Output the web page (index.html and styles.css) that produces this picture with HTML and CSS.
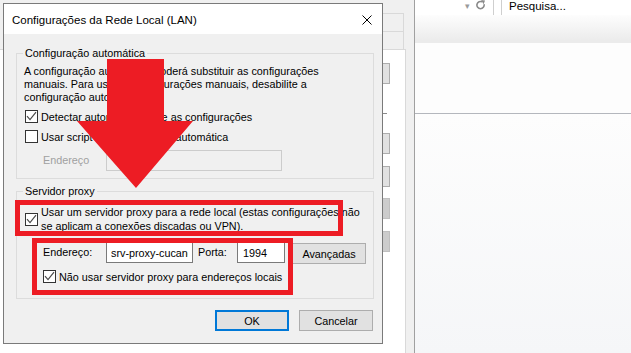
FILE: index.html
```html
<!DOCTYPE html>
<html lang="pt-BR">
<head>
<meta charset="utf-8">
<title>Configurações da Rede Local (LAN)</title>
<link rel="stylesheet" href="styles.css">
</head>
<body>
<div class="desktop">
  <div class="inetopt">
    <div class="io-top">
      <div class="io-box"><div class="io-box-row"></div></div>
    </div>
    <div class="io-panel">
      <div class="stub"></div>
      <div class="io-line"></div>
      <div class="stub stub-2"></div>
      <div class="stub stub-3"></div>
      <div class="stub stub-off stub-4"></div>
      <div class="stub stub-off stub-5"></div>
    </div>
  </div>

  <div class="browser">
    <div class="toolbar">
      <div class="address">
        <span class="dd">▾</span>
        <svg class="refresh" width="10" height="11" viewBox="0 0 10 11"><path d="M8 4.2 A3.6 3.6 0 1 1 6.2 1.9" fill="none" stroke="#8a8a8a" stroke-width="1.6"/><path d="M5 0 L9 0.6 L7.6 4.2 Z" fill="#8a8a8a"/></svg>
      </div>
      <div class="search">Pesquisa...</div>
    </div>
    <div class="cmdbar"></div>
    <div class="cmdstrip"></div>
    <div class="content">
      <div class="content-head"></div>
      <div class="content-body"></div>
    </div>
  </div>

  <div class="dialog">
    <div class="titlebar">
      <span class="title">Configurações da Rede Local (LAN)</span>
      <svg class="close" width="10" height="10" viewBox="0 0 10 10"><path d="M0.5 0.5 L9.5 9.5 M9.5 0.5 L0.5 9.5" stroke="#000" stroke-width="1"/></svg>
    </div>
    <div class="dlg-body">
      <fieldset class="group group-auto">
        <legend>Configuração automática</legend>
        <p class="desc">A configuração automática poderá substituir as configurações<br>manuais. Para usar as configurações manuais, desabilite a<br>configuração automática.</p>
        <div class="check-row row-detect">
          <span class="box"><svg width="11" height="11" viewBox="0 0 11 11"><path d="M1 5.2 L4 8.6 L10 1.2" fill="none" stroke="#4a4a4a" stroke-width="1.2"/></svg></span>
          <span>Detectar automaticamente as configurações</span>
        </div>
        <div class="check-row row-script">
          <span class="box"></span>
          <span>Usar script de configuração automática</span>
        </div>
        <div class="field-row row-disabled">
          <span class="lbl lbl-off">Endereço</span>
          <input class="inp inp-off" type="text" disabled>
        </div>
      </fieldset>

      <fieldset class="group group-proxy">
        <legend>Servidor proxy</legend>
        <div class="check-row check-multi">
          <span class="box"><svg width="11" height="11" viewBox="0 0 11 11"><path d="M1 5.2 L4 8.6 L10 1.2" fill="none" stroke="#4a4a4a" stroke-width="1.2"/></svg></span>
          <span class="multi">Usar um servidor proxy para a rede local (estas configurações não<br>se aplicam a conexões discadas ou VPN).</span>
        </div>
        <div class="field-row row-proxy">
          <span class="lbl">Endereço:</span>
          <input class="inp inp-addr" type="text" value="srv-proxy-cucanorte">
          <span class="lbl lbl-port">Porta:</span>
          <input class="inp inp-port" type="text" value="1994">
          <button class="btn btn-adv" type="button">Avançadas</button>
        </div>
        <div class="check-row row-local">
          <span class="box"><svg width="11" height="11" viewBox="0 0 11 11"><path d="M1 5.2 L4 8.6 L10 1.2" fill="none" stroke="#4a4a4a" stroke-width="1.2"/></svg></span>
          <span>Não usar servidor proxy para endereços locais</span>
        </div>
      </fieldset>

      <div class="actions">
        <button class="btn btn-ok" type="button">OK</button>
        <button class="btn" type="button">Cancelar</button>
      </div>
    </div>
  </div>

  <svg class="arrow" width="631" height="353" viewBox="0 0 631 353">
    <polygon points="107,59 164,59 164,121 193,121 136,188 77,121 107,121" fill="#ed1c24"/>
  </svg>
  <div class="mark mark-1"></div>
  <div class="mark mark-2"></div>
</div>
</body>
</html>
```

FILE: styles.css
```css
* { box-sizing: border-box; }
html, body { margin: 0; padding: 0; }
body {
  width: 631px;
  height: 353px;
  overflow: hidden;
  font-family: "Liberation Sans", Arial, sans-serif;
  font-size: 10.8px;
  color: #000;
  background: #f0f0f0;
}
.desktop {
  position: relative;
  display: flex;
  width: 631px;
  height: 353px;
}

/* Internet Options window behind */
.inetopt {
  width: 414px;
  display: flex;
  flex-direction: column;
  background: #f0f0f0;
}
.io-top {
  height: 49px;
  padding: 13px 0 0 340px;
}
.io-box {
  width: 64px;
  height: 36px;
  border-top: 1px solid #d9d9d9;
  border-right: 1px solid #d9d9d9;
}
.io-box-row {
  height: 18px;
  border-bottom: 1px solid #d9d9d9;
}
.io-panel {
  flex: 1;
  width: 406px;
  background: #fff;
  border-top: 1px solid #d9d9d9;
  border-right: 1px solid #d9d9d9;
  display: flex;
  flex-direction: column;
  align-items: flex-end;
  padding: 13px 15px 0 0;
}
.stub {
  width: 24px;
  height: 21px;
  background: #e1e1e1;
  border: 1px solid #adadad;
}
.io-line {
  width: 10px;
  height: 1px;
  background: #8a8a8a;
  margin: 29px 3px 0 0;
}
.stub-2 { margin-top: 19px; }
.stub-3 { margin-top: 12px; }
.stub-4 { margin-top: 11px; }
.stub-5 { margin-top: 12px; }
.stub-off { background: #cccccc; border-color: #bfbfbf; }

/* Browser behind */
.browser {
  flex: 1;
  border-left: 1px solid #a0a0a0;
  display: flex;
  flex-direction: column;
  background: #fff;
}
.toolbar {
  height: 15px;
  display: flex;
  background: #fff;
}
.address {
  width: 79px;
  border-right: 1px solid #cfcfcf;
  display: flex;
  align-items: flex-start;
  justify-content: flex-end;
  padding-right: 7px;
  gap: 6px;
}
.dd {
  color: #9a9a9a;
  font-size: 9px;
  line-height: 10px;
  margin-top: 1px;
}
.refresh { margin-top: 0; }
.search {
  flex: 1;
  margin-left: 7px;
  border-left: 1px solid #cfcfcf;
  padding-left: 7px;
  line-height: 13px;
  font-size: 11.5px;
}
.cmdbar {
  height: 25px;
  background: linear-gradient(#fdfdfd, #ececec);
}
.cmdstrip {
  height: 3px;
  background: #ebebeb;
}
.content {
  flex: 1;
  display: flex;
  flex-direction: column;
}
.content-head {
  height: 71px;
  background: #fdfdfd;
  border-bottom: 1px solid #b4b7bd;
}
.content-body {
  flex: 1;
  background: linear-gradient(#fdfdfd, #f5f6f8);
}

/* LAN dialog */
.dialog {
  position: absolute;
  left: 3px;
  top: 3px;
  width: 380px;
  height: 341px;
  border: 1px solid #7a7a7a;
  background: #f0f0f0;
  display: flex;
  flex-direction: column;
}
.titlebar {
  height: 30px;
  flex: none;
  background: #fff;
  display: flex;
  align-items: center;
  justify-content: space-between;
  padding: 0 10px 0 8px;
}
.title {
  font-size: 11.5px;
  line-height: 14px;
  margin-top: 2px;
}
.close { margin-top: 2px; }
.dlg-body {
  flex: 1;
  padding: 12px 8px 0 12px;
}
.group {
  margin: 0;
  border: 1px solid #dcdcdc;
  padding: 0 6px 7px 6px;
  min-inline-size: 0;
}
.group legend {
  padding: 0 2px;
  line-height: 14px;
}
.group-proxy {
  margin-top: 5px;
  padding-bottom: 14px;
}
.desc {
  margin: 5px 0 0 1px;
  line-height: 13px;
  white-space: nowrap;
}
.check-row {
  display: flex;
  align-items: center;
  gap: 3px;
  height: 17px;
  margin-left: 2px;
  white-space: nowrap;
}
.row-detect { margin-top: 4px; }
.row-script { margin-top: 3px; }
.box {
  width: 13px;
  height: 13px;
  flex: none;
  border: 1px solid #333;
  background: #fff;
  display: flex;
}
.check-multi {
  height: auto;
  margin-top: 7px;
}
.multi { line-height: 14px; }
.field-row {
  display: flex;
  align-items: flex-start;
  height: 21px;
  padding-left: 20px;
}
.row-disabled { margin-top: 5px; }
.row-proxy { margin-top: 9px; }
.lbl {
  width: 63px;
  line-height: 21px;
  flex: none;
}
.lbl-off { color: #a0a0a0; }
.lbl-port {
  width: 39px;
  margin-left: 5px;
}
.inp {
  height: 21px;
  border: 1px solid #7a7a7a;
  background: #fff;
  font: inherit;
  color: #000;
  padding: 0 4px;
  margin: 0;
  outline: none;
}
.inp-off {
  width: 176px;
  border-color: #cccccc;
  background: #f0f0f0;
}
.inp-addr { width: 87px; }
.inp-port { width: 48px; padding-left: 5px; }
.btn {
  width: 74px;
  height: 21px;
  margin: 0;
  padding: 0;
  background: #e1e1e1;
  border: 1px solid #adadad;
  font: inherit;
  color: #000;
}
.btn-adv {
  margin: 1px 0 0 7px;
}
.row-local {
  height: 15px;
  margin: 6px 0 0 20px;
}
.actions {
  display: flex;
  justify-content: flex-end;
  gap: 10px;
  margin-top: 11px;
  padding-right: 1px;
}
.btn-ok {
  border: 2px solid #0078d7;
}

/* annotations */
.arrow {
  position: absolute;
  left: 0;
  top: 0;
}
.mark {
  position: absolute;
  border: 5px solid #ed1c24;
}
.mark-1 {
  left: 15px;
  top: 200px;
  width: 328px;
  height: 36px;
}
.mark-2 {
  left: 32px;
  top: 238px;
  width: 261px;
  height: 57px;
}
```
